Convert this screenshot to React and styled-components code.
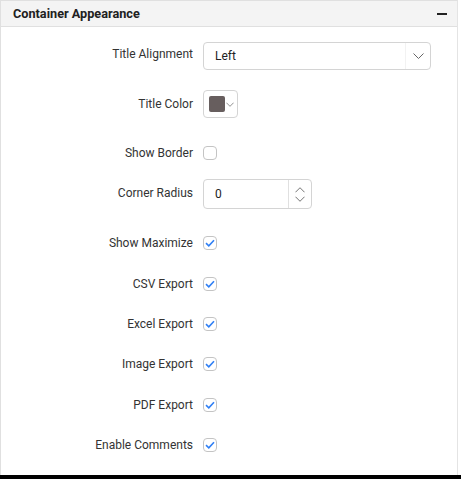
import React from "react";
import styled, { createGlobalStyle } from "styled-components";

const Global = createGlobalStyle`
  html, body { margin: 0; padding: 0; background: #fff; }
  body { font-family: Roboto, "Liberation Sans", sans-serif; overflow: hidden; }
`;

const Page = styled.div`
  width: 461px;
  height: 479px;
  display: flex;
  flex-direction: column;
`;

const Panel = styled.div`
  width: 458px;
  height: 475px;
  box-sizing: border-box;
  border: 1px solid #e0e0e0;
  border-bottom: none;
  border-right-color: #e4e4e4;
  display: flex;
  flex-direction: column;
  background: #fff;
`;

const Header = styled.div`
  height: 25px;
  flex: none;
  background: #f4f4f4;
  border-bottom: 1px solid #e0e0e0;
  display: flex;
  align-items: center;
  justify-content: space-between;
  padding: 0 10px 0 12px;
`;

const HeaderTitle = styled.span`
  font-size: 12.7px;
  font-weight: 700;
  color: #212121;
`;

const Minus = styled.span`
  width: 10px;
  height: 2px;
  background: #222;
  display: block;
`;

const Body = styled.div`
  display: flex;
  flex-direction: column;
  padding-top: 8px;
`;

const Row = styled.div`
  height: 40px;
  display: grid;
  grid-template-columns: 192px auto;
  column-gap: 10px;
  align-items: center;
  margin-bottom: ${(p) => p.$after || 0}px;
`;

const Label = styled.span`
  text-align: right;
  font-size: 12px;
  color: #333;
  justify-self: end;
  margin-top: ${(p) => p.$shift || 0}px;
`;

const Select = styled.div`
  width: 228px;
  height: 28px;
  box-sizing: border-box;
  border: 1px solid #d4d4d4;
  border-radius: 4px;
  display: flex;
  align-items: center;
  margin-top: 2px;
`;

const SelectText = styled.span`
  flex: 1;
  padding-left: 11px;
  font-size: 12px;
  color: #222;
`;

const SelectIcon = styled.span`
  width: 24px;
  height: 100%;
  border-left: 1px solid #f2f2f2;
  display: flex;
  align-items: center;
  justify-content: center;
`;

const ColorButton = styled.div`
  width: 35px;
  height: 28px;
  box-sizing: border-box;
  border: 1px solid #d4d4d4;
  border-radius: 4px;
  display: flex;
  align-items: center;
  padding-left: 5px;
  gap: 1px;
`;

const Swatch = styled.span`
  width: 16px;
  height: 16px;
  border-radius: 2px;
  background: ${(p) => p.$color};
`;

const Box = styled.span`
  width: 14px;
  height: 14px;
  box-sizing: border-box;
  border: 1px solid #c4c4c4;
  border-radius: 4px;
  display: flex;
  align-items: center;
  justify-content: center;
  background: #fff;
`;

const Numeric = styled.div`
  width: 109px;
  height: 30px;
  box-sizing: border-box;
  border: 1px solid #d4d4d4;
  border-radius: 4px;
  display: flex;
  align-items: center;
`;

const NumText = styled.span`
  flex: 1;
  padding-left: 11px;
  font-size: 12px;
  color: #222;
`;

const Spin = styled.span`
  width: 22px;
  height: 100%;
  border-left: 1px solid #e0e0e0;
  display: flex;
  flex-direction: column;
  align-items: center;
  justify-content: center;
  gap: 3px;
`;

const Chevron = ({ w = 11, h = 6, up }) => (
  <svg width={w} height={h} viewBox="0 0 11 6" fill="none">
    <path
      d={up ? "M0.5 5.5 L5.5 0.5 L10.5 5.5" : "M0.5 0.5 L5.5 5.5 L10.5 0.5"}
      stroke="#666"
      strokeWidth="1"
    />
  </svg>
);

const Check = () => (
  <svg width="10" height="8" viewBox="0 0 10 8" fill="none">
    <path d="M1 4.2 L3.8 6.8 L9 1.2" stroke="#2f7ff5" strokeWidth="1.6" />
  </svg>
);

const Checkbox = ({ checked }) => <Box>{checked && <Check />}</Box>;

const Footer = styled.div`
  flex: 1;
  background: #000;
`;

const checks = [
  ["Show Maximize", 1],
  ["CSV Export", 0],
  ["Excel Export", 0],
  ["Image Export", 1],
  ["PDF Export", 0],
  ["Enable Comments", 0],
];

export default function App() {
  return (
    <Page>
      <Global />
      <Panel>
        <Header>
          <HeaderTitle>Container Appearance</HeaderTitle>
          <Minus />
        </Header>
        <Body>
          <Row $after={9}>
            <Label $shift={-3}>Title Alignment</Label>
            <Select>
              <SelectText>Left</SelectText>
              <SelectIcon>
                <Chevron w={11} h={6} />
              </SelectIcon>
            </Select>
          </Row>
          <Row $after={9}>
            <Label>Title Color</Label>
            <ColorButton>
              <Swatch $color="#675e5e" />
              <Chevron w={8} h={5} />
            </ColorButton>
          </Row>
          <Row $after={1}>
            <Label>Show Border</Label>
            <Checkbox />
          </Row>
          <Row $after={9}>
            <Label $shift={-2}>Corner Radius</Label>
            <Numeric>
              <NumText>0</NumText>
              <Spin>
                <Chevron w={10} h={6} up />
                <Chevron w={10} h={6} />
              </Spin>
            </Numeric>
          </Row>
          {checks.map(([label, after]) => (
            <Row key={label} $after={after}>
              <Label>{label}</Label>
              <Checkbox checked />
            </Row>
          ))}
        </Body>
      </Panel>
      <Footer />
    </Page>
  );
}
